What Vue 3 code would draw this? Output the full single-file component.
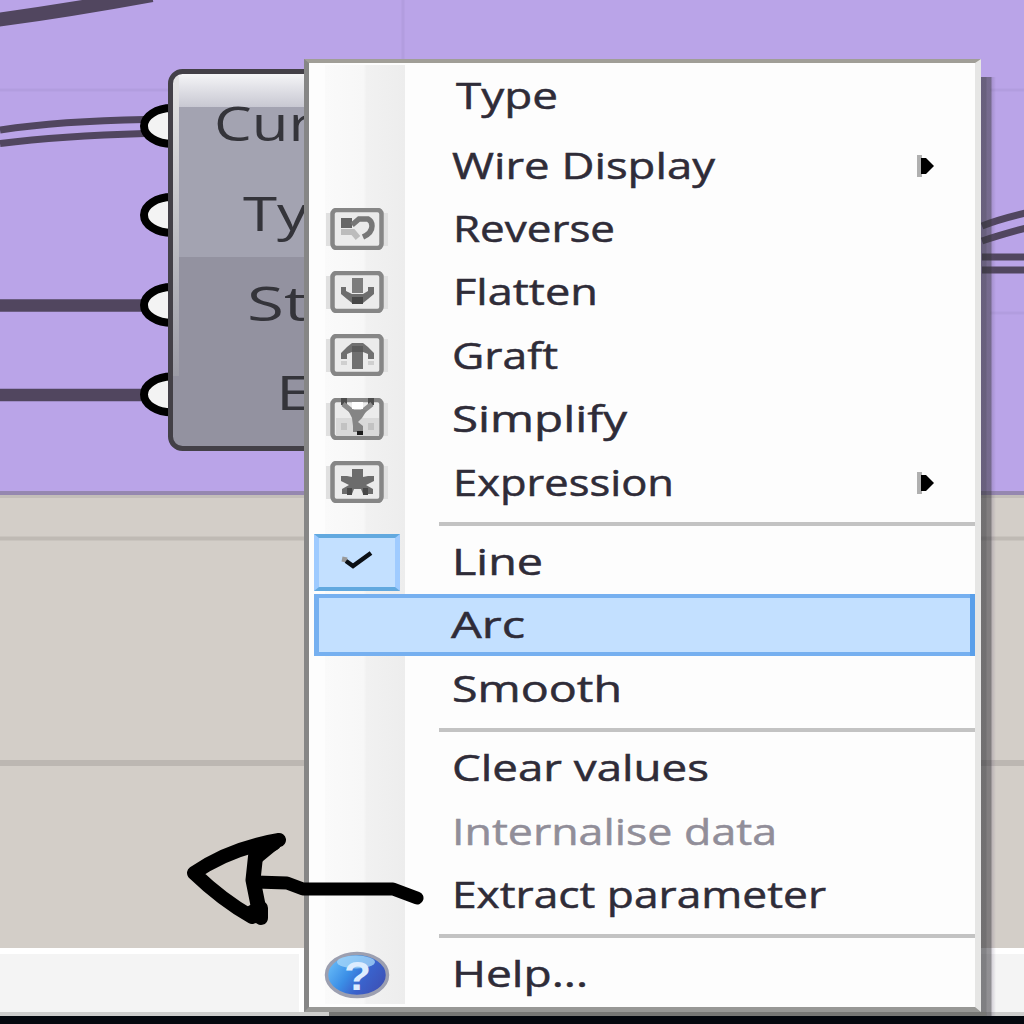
<script setup>
const items = [
  { t: 'Type', x: 456, w: 102 },
  { t: 'Wire Display', x: 452, w: 263, sub: true },
  { t: 'Reverse', x: 453, w: 162, icon: 'reverse' },
  { t: 'Flatten', x: 453, w: 145, icon: 'flatten' },
  { t: 'Graft', x: 452, w: 106, icon: 'graft' },
  { t: 'Simplify', x: 452, w: 175, icon: 'simplify' },
  { t: 'Expression', x: 453, w: 221, icon: 'expression', sub: true },
  { sep: true },
  { t: 'Line', x: 452, w: 91, check: true },
  { t: 'Arc', x: 451, w: 74, hot: true },
  { t: 'Smooth', x: 452, w: 170 },
  { sep: true },
  { t: 'Clear values', x: 452, w: 257 },
  { t: 'Internalise data', x: 452, w: 325, off: true },
  { t: 'Extract parameter', x: 452, w: 374 },
  { sep: true },
  { t: 'Help...', x: 452, w: 136, help: true },
]
const grips = [126, 215, 305, 394.5]
</script>

<template>
  <main class="stage">
    <svg class="canvas" width="1024" height="1024" viewBox="0 0 1024 1024">
      <defs>
        <linearGradient id="gloss" x1="0" y1="0" x2="0" y2="1">
          <stop offset="0" stop-color="#f6f6f8" />
          <stop offset="1" stop-color="#c8c8d2" />
        </linearGradient>
        <linearGradient id="edge" x1="0" y1="0" x2="0" y2="1">
          <stop offset="0" stop-color="#e4e4e4" />
          <stop offset="1" stop-color="#9c9ca6" />
        </linearGradient>
        <clipPath id="body"><rect x="170" y="71" width="200" height="379" rx="13" /></clipPath>
      </defs>
      <rect width="1024" height="494" fill="#baa4e8" />
      <rect y="492" width="1024" height="457" fill="#d3cec8" />
      <rect y="491" width="1024" height="4" fill="#9587b0" />
      <rect y="495" width="1024" height="3" fill="#c3beb9" />
      <rect y="948" width="1024" height="6" fill="#fff" />
      <rect y="954" width="1024" height="58" fill="#f4f4f4" />
      <rect x="299" y="954" width="7" height="58" fill="#fff" />
      <rect y="1012" width="1024" height="5" fill="#cdcdcc" />
      <rect y="1016" width="1024" height="8" fill="#04070e" />
      <path d="M0 90H170M990 90H1024M990 313H1024" stroke="#b29ddf" stroke-width="3" />
      <path d="M403 0V60" stroke="#b29ddf" stroke-width="3" />
      <path d="M0 538.5H1024" stroke="#bfbab4" stroke-width="4" />
      <path d="M0 763H1024" stroke="#bcb7b2" stroke-width="6" />
      <g fill="none" stroke="#51465f">
        <path d="M-4 20Q70 10 152 -5" stroke-width="14" />
        <path d="M0 130Q60 121 145 119.500" stroke-width="7" />
        <path d="M0 143.500Q60 136 145 133.500" stroke-width="7" />
        <path d="M0 305.500H145M0 395H145" stroke-width="12.500" />
        <path d="M982 226Q1000 219 1026 213M982 241Q1000 235 1026 228" stroke-width="7" />
        <path d="M982 257H1024M982 270H1024" stroke-width="7" />
      </g>
      <g v-for="y in grips" :key="y">
        <ellipse cx="172" :cy="y" rx="28" ry="18" fill="#f3f3f3" stroke="#000" stroke-width="8" />
      </g>
      <g clip-path="url(#body)">
        <rect x="170" y="71" width="200" height="187" fill="#a3a3b1" />
        <rect x="170" y="257" width="200" height="193" fill="#9392a0" />
        <rect x="170" y="73" width="200" height="34" fill="url(#gloss)" />
        <rect x="173" y="76" width="6" height="300" fill="url(#edge)" />
      </g>
      <rect x="170.500" y="71.500" width="200" height="377" rx="12" fill="none" stroke="#434047" stroke-width="5" />
      <g class="port">
        <text x="214" y="141" textLength="99" lengthAdjust="spacingAndGlyphs">Cur</text>
        <text x="243" y="230.500" textLength="65" lengthAdjust="spacingAndGlyphs">Ty</text>
        <text x="247" y="321" textLength="61" lengthAdjust="spacingAndGlyphs">St</text>
        <text x="276" y="410" textLength="36" lengthAdjust="spacingAndGlyphs">E</text>
      </g>
    </svg>

    <nav class="menu">
      <template v-for="(it, i) in items" :key="i">
        <div v-if="it.sep" class="sep"></div>
        <div v-else class="row" :class="{ hot: it.hot, off: it.off, first: i === 0 }">
          <span class="slot" :class="{ checked: it.check }">
            <svg v-if="it.icon" class="icon" width="64" height="42" viewBox="0 0 64 42">
              <path d="M1 5H63V38H1Z" fill="#e0e0e0" />
              <rect x="7.500" y="2" width="49" height="38" rx="4" fill="#ebebeb" stroke="#868686" stroke-width="4.500" />
              <g v-if="it.icon === 'reverse'" fill="none" stroke="#777">
                <path d="M16 15H27" stroke="#666" stroke-width="10" />
                <path d="M27 17L34 11H43Q47 13 47 18Q47 25 38 29" stroke-width="5.500" />
                <path d="M16 24H28L33 30" stroke="#bcbcbc" stroke-width="6" />
              </g>
              <g v-else-if="it.icon === 'flatten'" fill="#6e6e6e">
                <path d="M27 7H38V22H27Z" fill="#7d7d7d" />
                <path d="M16 16H21V20L27 23H38L43 20V16H49V23L43 28L38 32H27L22 28L16 23Z" />
                <path d="M27 26H38V33H27Z" fill="#484848" />
              </g>
              <g v-else-if="it.icon === 'graft'" fill="#707070">
                <path d="M27 9H38L43 13L49 19V25H43V20L38 18V35H27V18L22 20V25H16V19L22 13Z" />
                <path d="M27 12H38V18H27Z" fill="#5c5c5c" />
                <path d="M16 27H22V31H16ZM43 27H49V31H43Z" fill="#cfcfcf" />
              </g>
              <g v-else-if="it.icon === 'simplify'">
                <path d="M11 20H54V38H11Z" fill="#d9d9d9" />
                <path d="M16 0H22V7H16ZM43 0H49V7H43Z" fill="#4d4d4d" />
                <path d="M18 6L28 14H37L47 6" fill="none" stroke="#8c8c8c" stroke-width="5" />
                <path d="M27 4H38V11H27Z" fill="#fff" />
                <path d="M23 12H42L37 20L33 24L38 28V34H28V28L27 20Z" fill="#858585" />
                <path d="M32 33H38V37H32Z" fill="#1c1c1c" />
                <path d="M16 25H22V32H16ZM43 25H49V32H43Z" fill="#c2c2c2" />
              </g>
              <g v-else fill="#6c6c6c">
                <path d="M27 8H38V16L43 15H49V20L41 24L48 28V33H38L36 28H29L27 33H17V28L24 24L16 20V15H22L27 16Z" />
                <path d="M22 27H27V34H22ZM38 27H43V34H38Z" fill="#484848" />
              </g>
            </svg>
            <svg v-else-if="it.check" class="tick" width="36" height="22" viewBox="0 0 36 22">
              <path d="M3 9L8 10" fill="none" stroke="#999" stroke-width="5" />
              <path d="M7 11L14 16L32 3" fill="none" stroke="#0b0f14" stroke-width="4.500" />
            </svg>
            <svg v-else-if="it.help" class="orb" width="66" height="48" viewBox="0 0 66 48">
              <defs>
                <linearGradient id="orb" x1="0" y1="0.200" x2="1" y2="0.700">
                  <stop offset="0" stop-color="#6cc0fa" />
                  <stop offset=".4" stop-color="#3b8ee6" />
                  <stop offset=".65" stop-color="#3a62cc" />
                  <stop offset="1" stop-color="#3d50b4" />
                </linearGradient>
              </defs>
              <ellipse cx="33" cy="24" rx="30.500" ry="21.500" fill="url(#orb)" stroke="#9c9fb0" stroke-width="3.500" />
              <ellipse cx="32" cy="11" rx="19" ry="6.500" fill="#a9d8fa" opacity=".75" />
              <text x="20" y="39" class="q" textLength="27" lengthAdjust="spacingAndGlyphs">?</text>
            </svg>
          </span>
          <svg class="label" width="440" height="63" :style="{ marginLeft: it.x - 400 + 'px' }">
            <text x="0" y="43.800" :textLength="it.w" lengthAdjust="spacingAndGlyphs">{{ it.t }}</text>
          </svg>
          <svg v-if="it.sub" class="sub" width="20" height="24" viewBox="0 0 20 24">
            <path d="M0 1H5V23H0Z" fill="#b0b0b0" />
            <path d="M4 4H9L17 12L9 20H4Z" fill="#000" />
          </svg>
        </div>
      </template>
    </nav>

    <svg class="ink" width="260" height="110" viewBox="180 825 260 110">
      <g fill="none" stroke="#000" stroke-linecap="round" stroke-linejoin="round">
        <path d="M279 840Q230 848 194 873Q222 900 252 917" stroke-width="14" />
        <path d="M274 843L256 852L253 880L260 915" stroke-width="15" />
        <path d="M256 845L275 844L258 858Z" stroke-width="11" />
        <path d="M252 912L261 918V908Z" stroke-width="14" />
        <path d="M256 882L287 883L303 889H393L417 898" stroke-width="13" />
      </g>
    </svg>
  </main>
</template>

<style>
body {
  margin: 0;
  overflow: hidden;
}
</style>

<style scoped>
.stage {
  position: relative;
  width: 1024px;
  height: 1024px;
  overflow: hidden;
}
.canvas {
  display: block;
}
.port text {
  font: 48px 'Open Sans', 'Noto Sans', sans-serif;
  fill: #34343a;
}
.menu {
  position: absolute;
  left: 304px;
  top: 59px;
  width: 677px;
  height: 953px;
  box-sizing: border-box;
  border-style: solid;
  border-color: #a09e97 #e6e6e5 #989896 #868686;
  border-width: 4px 6px 5px 5px;
  background:
    linear-gradient(90deg, #fafafa, #f7f7f7 48%, #f1f1f1 52%, #ededed) 16px 2px / 80px 939px no-repeat,
    #fdfdfd;
}
.menu::before {
  content: '';
  position: absolute;
  left: 672px;
  top: 14px;
  width: 15px;
  height: 939px;
  background: linear-gradient(90deg, rgba(55, 55, 60, 0.62) 0 5px, rgba(60, 58, 65, 0.54) 6px 10px, rgba(90, 75, 110, 0.2) 11px, transparent);
}
.menu::after {
  content: '';
  position: absolute;
  left: 20px;
  top: 949px;
  width: 657px;
  height: 4px;
  background: #777775;
}
.row {
  display: flex;
  align-items: center;
  height: 63.4px;
  box-sizing: border-box;
  padding-left: 5px;
}
.row.first {
  height: 71.500px;
  padding-bottom: 4px;
}
.hot {
  background:
    linear-gradient(#5a9fea, #5a9fea) 661px 0 / 5px 62px no-repeat,
    linear-gradient(#c3e0ff, #c3e0ff) 10px 4px / 651px 54px no-repeat,
    linear-gradient(#76b0f0, #76b0f0) 5px 0 / 656px 62px no-repeat;
}
.slot {
  display: flex;
  flex: none;
  align-items: center;
  justify-content: center;
  width: 86px;
  height: 57px;
  box-sizing: border-box;
}
.icon {
  margin-bottom: 2px;
}
.checked {
  border: 4px solid #62a9df;
  border-left: 5px solid #9fcbff;
  border-right: 5px solid #9fcbff;
  background: #c3e0ff;
}
.tick {
  margin-bottom: 4px;
}
.orb {
  overflow: visible;
}
.label {
  flex: none;
  overflow: visible;
}
.label text {
  font: 36.500px 'Open Sans', 'Noto Sans', sans-serif;
  fill: #2f2c38;
  stroke: #2f2c38;
  stroke-width: 0.5px;
}
.off .label text {
  fill: #918e99;
  stroke: #918e99;
}
.sub {
  position: absolute;
  left: 608px;
}
.sep {
  height: 16px;
  margin-left: 130px;
  background: linear-gradient(#c3c3c3, #c3c3c3) 0 7px / 100% 4px no-repeat;
}
.q {
  font: bold 40px 'Liberation Sans', sans-serif;
  fill: #dcecff;
}
.ink {
  position: absolute;
  left: 180px;
  top: 825px;
}
</style>
